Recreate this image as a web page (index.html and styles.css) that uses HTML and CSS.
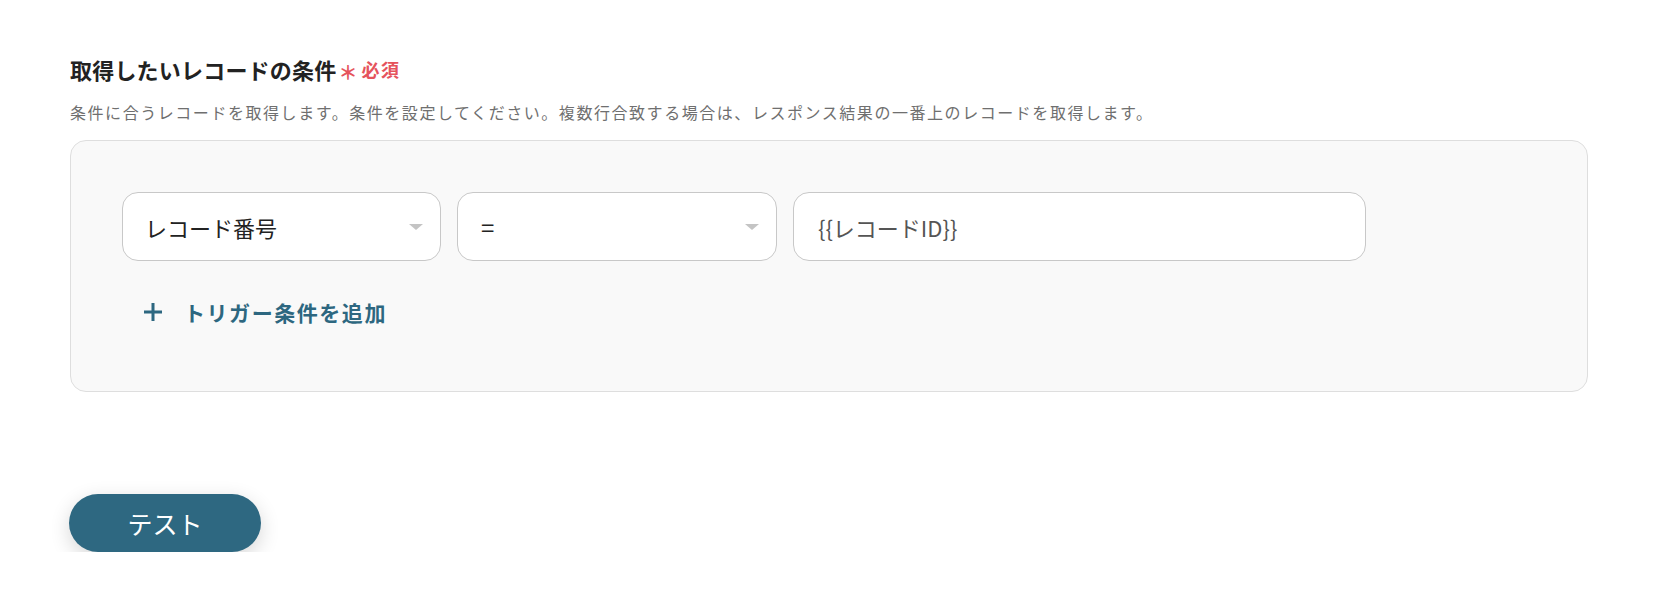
FILE: index.html
```html
<!DOCTYPE html>
<html lang="ja">
<head>
<meta charset="utf-8">
<title>条件</title>
<link rel="stylesheet" href="styles.css">
</head>
<body>
<div class="page">
  <div class="field">
    <div class="label-row">
      <span class="label">取得したいレコードの条件</span>
      <span class="req-star">＊</span>
      <span class="req">必須</span>
    </div>
    <p class="desc">条件に合うレコードを取得します。条件を設定してください。複数行合致する場合は、レスポンス結果の一番上のレコードを取得します。</p>
    <div class="panel">
      <div class="cond-row">
        <div class="select select-field">
          <span class="select-text">レコード番号</span>
          <span class="caret"></span>
        </div>
        <div class="select select-op">
          <span class="select-text">=</span>
          <span class="caret"></span>
        </div>
        <div class="input-box">{{レコードID}}</div>
      </div>
      <div class="add-row">
        <svg class="plus" width="20" height="20" viewBox="0 0 20 20"><path d="M10 1v18M1 10h18" stroke="#2d6780" stroke-width="3" fill="none"/></svg>
        <span class="add-text">トリガー条件を追加</span>
      </div>
    </div>
  </div>
  <button class="test-btn">テスト</button>
</div>
</body>
</html>
```

FILE: styles.css
```css
* { box-sizing: border-box; }
body {
  margin: 0;
  background: #fff;
  font-family: "Noto Sans CJK JP", "Noto Sans", sans-serif;
}
.page {
  padding: 53px 80px 0 70px;
}
.label-row {
  display: flex;
  align-items: center;
  height: 32px;
}
.label {
  font-size: 22px;
  font-weight: 700;
  color: #222;
  letter-spacing: 0.2px;
}
.req-star {
  color: #e5535c;
  font-size: 19px;
  font-weight: 700;
  margin-left: 2px;
  margin-top: 4px;
  line-height: 1;
}
.req {
  color: #e5535c;
  font-size: 18px;
  font-weight: 700;
  margin-left: 4px;
  letter-spacing: 1.5px;
}
.desc {
  margin: 15px 0 0;
  font-size: 16px;
  line-height: 24px;
  color: #6f6f6f;
  letter-spacing: 1.55px;
}
.panel {
  margin-top: 16px;
  background: #f9f9f9;
  border: 1px solid #dedede;
  border-radius: 16px;
  padding: 51px 51px 64px;
}
.cond-row {
  display: flex;
  gap: 16px;
}
.select, .input-box {
  height: 69px;
  background: #fff;
  border: 1px solid #c8c8c8;
  border-radius: 16px;
  display: flex;
  align-items: center;
  padding: 0 17px 0 22px;
  font-size: 22px;
}
.select-field { width: 319px; }
.select-op { width: 320px; }
.input-box { width: 573px; padding-left: 24px; color: #555; }
.select { justify-content: space-between; color: #222; }
.select-op .select-text { margin-left: 1px; font-size: 24px; }
.caret {
  width: 0;
  height: 0;
  border-left: 7px solid transparent;
  border-right: 7px solid transparent;
  border-top: 6px solid #c4c4c4;
}
.add-row {
  display: flex;
  align-items: center;
  margin-top: 36px;
  margin-left: 21px;
  height: 30px;
}
.plus { display: block; }
.add-text {
  margin-left: 21px;
  font-size: 21px;
  font-weight: 700;
  color: #2d6780;
  letter-spacing: 1.55px;
}
.test-btn {
  margin-top: 102px;
  margin-left: -1px;
  width: 192px;
  height: 58px;
  border: none;
  border-radius: 29px;
  background: #2e6881;
  color: #fff;
  font-family: "Noto Sans CJK JP", "Noto Sans", sans-serif;
  font-size: 25px;
  box-shadow: 0 6px 20px rgba(0, 0, 0, 0.16);
}
```
